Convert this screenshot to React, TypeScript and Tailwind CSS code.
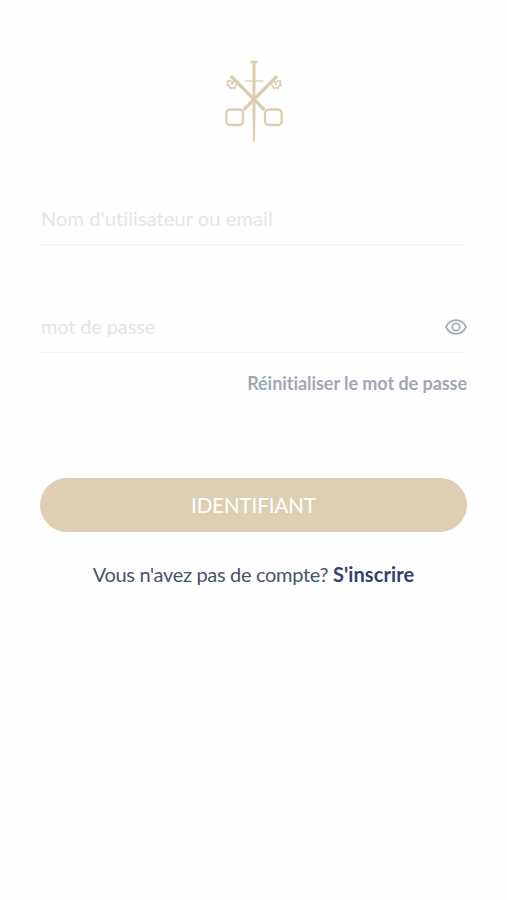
import React from "react";

function CrossedKeys() {
  return (
    <svg className="h-[84px] w-[60px]" viewBox="0 0 60 84" fill="none" stroke="#dccdb0">
      <path d="M6.800 17 40.500 51" strokeWidth="3.400" />
      <path d="M53.200 17 19.500 51" strokeWidth="3.400" />
      <rect x="2.300" y="50.500" width="16.700" height="15.500" rx="4" strokeWidth="2.300" />
      <rect x="41" y="50.500" width="16.700" height="15.500" rx="4" strokeWidth="2.300" />
      <g strokeWidth="1.500">
        <path d="M11 21.500l-2.500 2-2.500-2-2.500.5.5 2.500-1 2 2.500.5.500 2.500 2.500-1 2 1 .5-2.500L13 25M6.500 25h3" />
        <path d="M49 21.500l2.500 2 2.500-2 2.500.5-.5 2.500 1 2-2.500.5-.5 2.500-2.500-1-2 1-.5-2.500L47 25M53.500 25h-3" />
      </g>
      <path d="M20.500 22h19" strokeWidth="1.300" />
      <path d="M26.500 3h7" strokeWidth="2.500" />
      <path d="M28.500 3h3v47l-.6 32.500h-1.800l-.6-32.500Z" fill="#dccdb0" stroke="none" />
    </svg>
  );
}

function EyeIcon() {
  return (
    <svg className="h-4 w-[22px]" viewBox="0 0 22 16" fill="none" stroke="#a5abb9" strokeWidth="1.8">
      <path d="M1 8C3 3.800 6.600 1.200 11 1.200S19 3.800 21 8c-2 4.200-5.600 6.800-10 6.800S3 12.200 1 8Z" />
      <circle cx="11" cy="8" r="3.700" />
    </svg>
  );
}

export default function App() {
  return (
    <main className="flex h-[900px] w-full flex-col bg-[#fefefe] px-10 pt-[59px] font-['Lato',sans-serif] [font-variant-ligatures:none]">
      <div className="flex justify-center">
        <CrossedKeys />
      </div>
      <div className="mt-[50px] flex h-[52px] items-center border-b border-[#f4f4f4] pb-0.5 pl-px text-[20px] text-[#e5e5e7]">
        <span className="tracking-[0.1px] whitespace-nowrap">Nom d'utilisateur ou email</span>
      </div>
      <div className="mt-14 flex h-[52px] items-center justify-between border-b border-[#f4f4f4] pl-px text-[20px] text-[#e5e5e7]">
        <span className="pb-0.5 tracking-[-0.14px]">mot de passe</span>
        <button aria-label="Afficher le mot de passe">
          <EyeIcon />
        </button>
      </div>
      <a className="mt-4 self-end text-[18px] leading-[28px] font-bold tracking-[-0.05px] whitespace-nowrap text-[#a1a7b7]">
        Réinitialiser le mot de passe
      </a>
      <button className="mt-[81px] h-[54px] shrink-0 rounded-full bg-[#decfb4] text-[20.4px] text-white">
        IDENTIFIANT
      </button>
      <p className="mt-7 text-center text-[20px] leading-[28px] whitespace-nowrap text-[#48526f]">
        <span className="tracking-[-0.32px]">Vous n'avez pas de compte? </span>
        <a className="font-bold tracking-[0.1px] text-[#34426a]">S'inscrire</a>
      </p>
    </main>
  );
}
